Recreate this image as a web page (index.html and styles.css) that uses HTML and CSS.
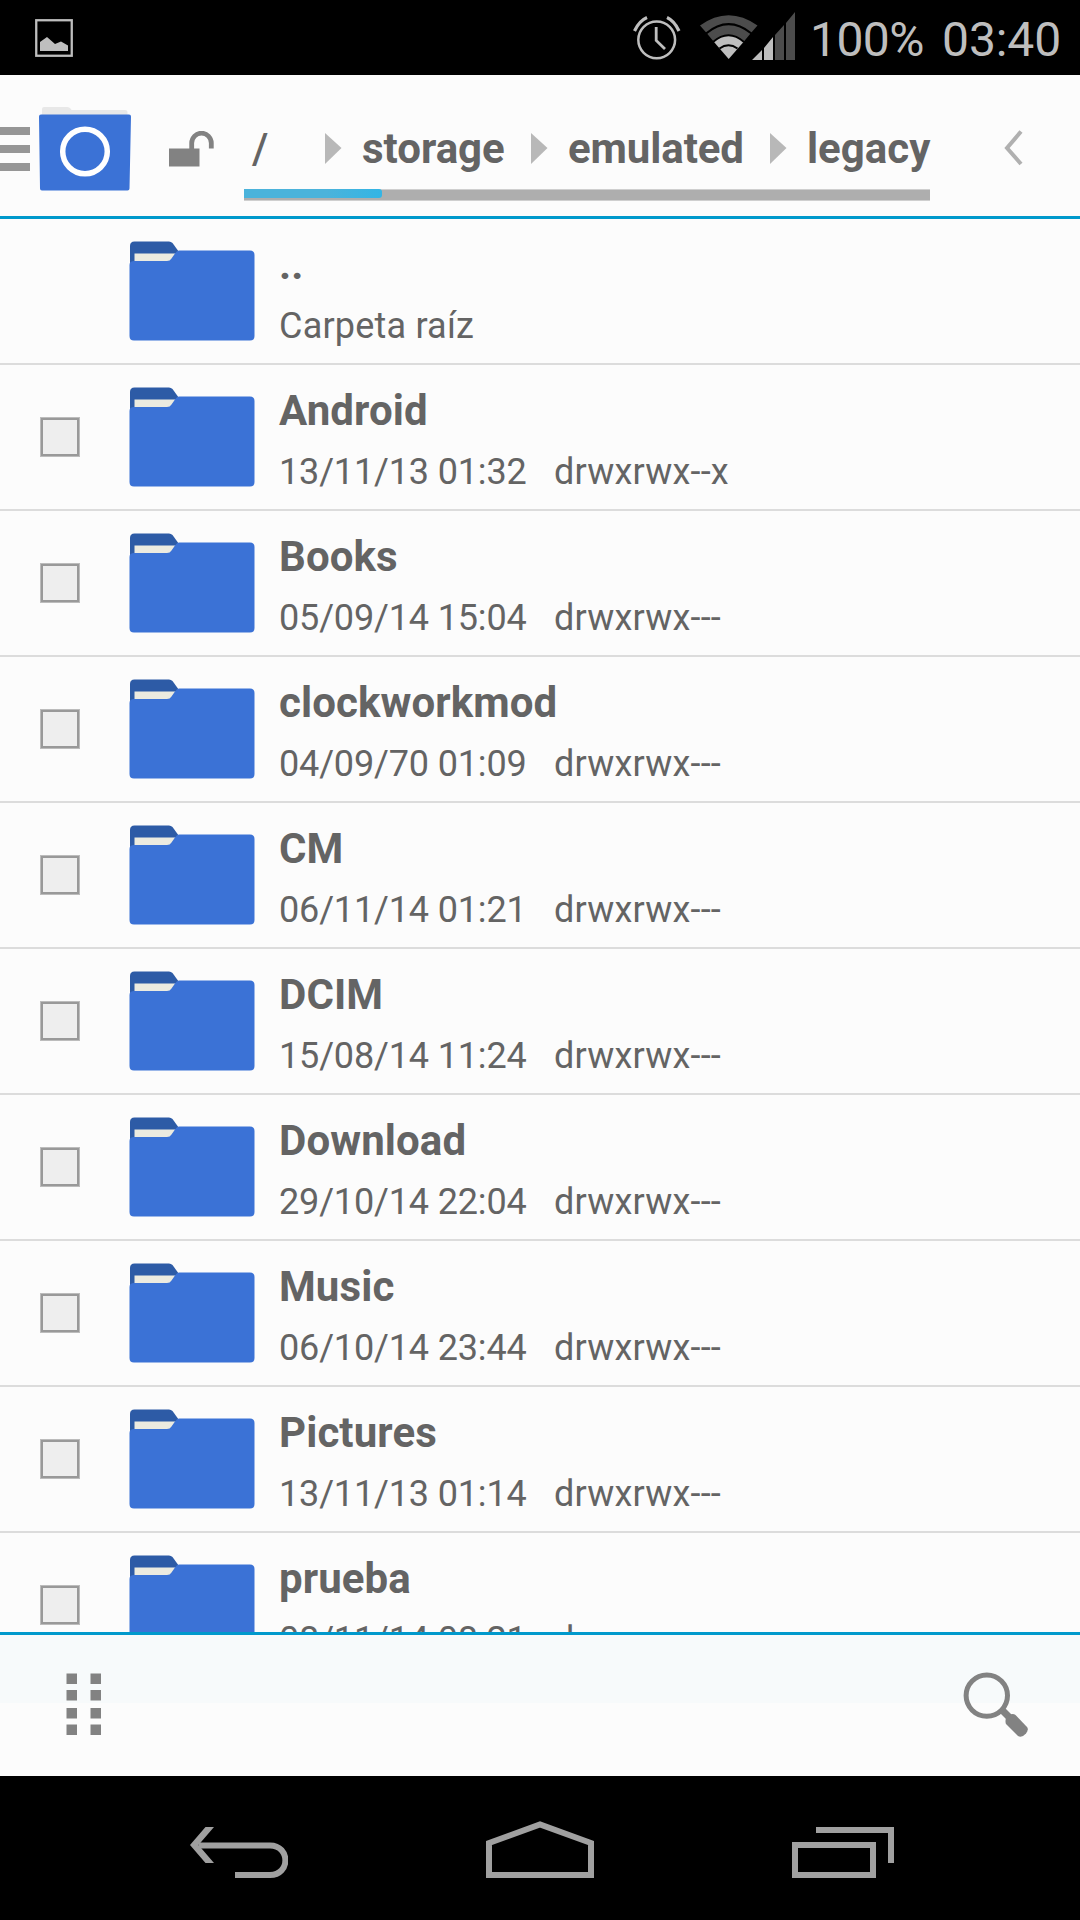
FILE: index.html
```html
<!DOCTYPE html>
<html lang="es">
<head>
<meta charset="utf-8">
<title>File Manager</title>
<link rel="stylesheet" href="styles.css">
</head>
<body>
<svg class="defs" width="0" height="0">
  <symbol id="folder" viewBox="0 0 126 100">
    <path d="M1 30V5Q1 .5 5.500.5H40Q42 .5 43.500 2L50 11V30Z" fill="#2d5ba6"/>
    <path d="M5.500 12.500H47V21H5.500Z" fill="#ecebe0"/>
    <path d="M50 9.500H121Q125.500 9.500 125.500 14V95Q125.500 99.500 121 99.500H5Q.5 99.500.5 95V24Q.5 20 5 20H38Q41 20 42.500 17.500L46 12.500Q48 9.500 50 9.500Z" fill="#3b72d6"/>
  </symbol>
  <symbol id="sep" viewBox="0 0 17 31"><path d="M0 0L16.500 15L0 31Z" fill="#b8b8b8"/></symbol>
</svg>
<div class="screen">
  <header class="status">
    <svg class="shot" width="38" height="38" viewBox="0 0 38 38"><rect x="1.250" y="1.250" width="35.500" height="35.500" fill="none" stroke="#bebebe" stroke-width="2.300"/><path d="M5 32V23L12 18L20 25L26 22.500L33 26.500V32Z" fill="#bebebe"/></svg>
    <svg class="alarm" width="48" height="46" viewBox="0 0 48 46" fill="none" stroke="#bebebe"><circle cx="23.700" cy="24.800" r="18.400" stroke-width="2.500"/><path d="M1.500 16Q6 6 14 2.500M46 16Q41.500 6 34 2.500" stroke-width="3.200"/><path d="M23.200 12V25.500L32 34" stroke-width="2.800"/></svg>
    <svg class="wifi" width="60" height="46" viewBox="0 0 60 46"><path d="M1 11.500Q29.500-9 58.500 11.500L51.500 19.500Q29.500 3.500 8 19.500Z" fill="#4c4c4c"/><path d="M8 19.500Q29.500 1.500 51.500 19.500L44.500 28Q29.500 15 15 28Z" fill="#4c4c4c"/><path d="M15 28Q29.500 14 44.500 28L29.700 45Z" fill="#bebebe"/><path d="M7 19.500Q29.500.7 52.500 19.500M14 28Q29.500 14.500 45 28M20.500 34.500Q29.500 28 38.500 34.500" fill="none" stroke="#000" stroke-width="2"/></svg>
    <svg class="signal" width="44" height="48" viewBox="0 0 44 48"><path d="M0 48L10 38V48ZM12 36L21 25V48H12Z" fill="#bebebe"/><path d="M23 23L32 13V48H23ZM34 11L43 0V48H34Z" fill="#4c4c4c"/></svg>
    <span class="battery">100%</span><span class="clock">03:40</span>
  </header>
  <nav class="bar">
    <div class="burger"><i></i><i></i><i></i></div>
    <svg class="app" width="92" height="86" viewBox="0 0 92 86"><path d="M3 12V3Q3 1 5 1H28Q31 1 32.500 4H86Q88.500 4 88.500 6V12Z" fill="#e8e8e8"/><path d="M2 8.500H90Q92 8.500 92 10.500L90.500 82.500Q90.500 84.500 88.500 84.500H3Q1 84.500 1 82.500L0 10.500Q0 8.500 2 8.500Z" fill="#3b72d6"/><circle cx="46" cy="45.500" r="22.300" fill="none" stroke="#fff" stroke-width="5.500"/></svg>
    <svg class="lock" width="46" height="36" viewBox="0 0 46 36"><path d="M0 17.500H30.500V35.500H0Z" fill="#828282"/><path d="M22.700 18V12A9.800 9.800 0 0 1 42.300 12V17.500" fill="none" stroke="#828282" stroke-width="4.800"/></svg>
    <div class="path">
      <div class="crumbs">
        <span class="crumb root">/</span><svg class="sep"><use href="#sep"/></svg>
        <span class="crumb storage">storage</span><svg class="sep"><use href="#sep"/></svg>
        <span class="crumb emulated">emulated</span><svg class="sep"><use href="#sep"/></svg>
        <span class="crumb legacy">legacy</span>
      </div>
      <div class="usage"><div class="used"></div></div>
    </div>
    <svg class="chev" width="20" height="36" viewBox="0 0 20 36"><path d="M17 1.500L3 18L17 34" fill="none" stroke="#b0b0b0" stroke-width="4"/></svg>
  </nav>
  <main class="list">
    <div class="row"><span class="nobox"></span><svg class="folder"><use href="#folder"/></svg><div class="info"><b>..</b><p><span class="note">Carpeta raíz</span></p></div></div>
    <div class="row"><span class="box"></span><svg class="folder"><use href="#folder"/></svg><div class="info"><b>Android</b><p><span class="date">13/11/13 01:32</span><span class="perm">drwxrwx--x</span></p></div></div>
    <div class="row"><span class="box"></span><svg class="folder"><use href="#folder"/></svg><div class="info"><b>Books</b><p><span class="date">05/09/14 15:04</span><span class="perm">drwxrwx---</span></p></div></div>
    <div class="row"><span class="box"></span><svg class="folder"><use href="#folder"/></svg><div class="info"><b>clockworkmod</b><p><span class="date">04/09/70 01:09</span><span class="perm">drwxrwx---</span></p></div></div>
    <div class="row"><span class="box"></span><svg class="folder"><use href="#folder"/></svg><div class="info"><b>CM</b><p><span class="date">06/11/14 01:21</span><span class="perm">drwxrwx---</span></p></div></div>
    <div class="row"><span class="box"></span><svg class="folder"><use href="#folder"/></svg><div class="info"><b>DCIM</b><p><span class="date">15/08/14 11:24</span><span class="perm">drwxrwx---</span></p></div></div>
    <div class="row"><span class="box"></span><svg class="folder"><use href="#folder"/></svg><div class="info"><b>Download</b><p><span class="date">29/10/14 22:04</span><span class="perm">drwxrwx---</span></p></div></div>
    <div class="row"><span class="box"></span><svg class="folder"><use href="#folder"/></svg><div class="info"><b>Music</b><p><span class="date">06/10/14 23:44</span><span class="perm">drwxrwx---</span></p></div></div>
    <div class="row"><span class="box"></span><svg class="folder"><use href="#folder"/></svg><div class="info"><b>Pictures</b><p><span class="date">13/11/13 01:14</span><span class="perm">drwxrwx---</span></p></div></div>
    <div class="row"><span class="box"></span><svg class="folder"><use href="#folder"/></svg><div class="info"><b>prueba</b><p><span class="date">08/11/14 08:21</span><span class="perm">drwxrwx---</span></p></div></div>
  </main>
  <footer class="tools">
    <svg class="dots" width="36" height="64" viewBox="0 0 36 64"><path d="M.5.500h10.500v10.500H.5ZM24.500.5h10.500v10.500H24.500ZM.5 17h10.500v10.500H.5ZM24.500 17h10.500v10.500H24.500ZM.5 35h10.500v10.500H.5ZM24.500 35h10.500v10.500H24.500ZM.5 51.500h10.500v10.500H.5ZM24.500 51.500h10.500v10.500H24.500Z" fill="#828282"/></svg>
    <svg width="68" height="68" viewBox="0 0 68 68"><circle cx="24.800" cy="24.600" r="20.700" fill="none" stroke="#828282" stroke-width="5"/><path d="M39 38L48 47" stroke="#828282" stroke-width="7"/><path d="M44 46.500Q50 41 53.500 44L65 56Q67 58.500 64 62.500Q59.500 67.500 56 65L44 53Q43 51 44 46.500Z" fill="#828282"/></svg>
  </footer>
  <div class="system">
    <svg width="98" height="52" viewBox="0 0 98 52"><path d="M9 18.500H80C100.500 18.500 100.500 48 80 48H45" fill="none" stroke="#a0a0a0" stroke-width="6"/><path d="M0 18L15.500 0H24L8.500 18L24 36H15.500Z" fill="#a0a0a0"/></svg>
    <svg width="108" height="58" viewBox="0 0 108 58"><path d="M3 54V22L54 3.500L105 22V54Z" fill="none" stroke="#a0a0a0" stroke-width="6"/></svg>
    <svg width="102" height="52" viewBox="0 0 102 52" fill="none" stroke="#a0a0a0" stroke-width="6"><path d="M3 18H81V48H3ZM24 3H99V36"/></svg>
  </div>
</div>
</body>
</html>
```
FILE: styles.css
```css
* { box-sizing: border-box; }
body { margin: 0; background: #000; font-family: Roboto, sans-serif; color: #646464; }
svg { display: block; flex: none; }
.defs { position: absolute; }
.screen { width: 1080px; height: 1920px; display: flex; flex-direction: column; overflow: hidden; }

.status { height: 75px; flex: none; display: flex; align-items: flex-start; color: #bebebe; font-size: 48px; line-height: 56px; white-space: nowrap; }
.shot { margin: 19px 0 0 35px; }
.alarm { margin: 15px 0 0 560px; }
.wifi { margin: 14px 0 0 18px; }
.signal { margin: 12px 0 0 -7px; }
.battery { width: 132px; margin: 12px 0 0 14px; letter-spacing: -.6px; }
.clock { margin-top: 12px; letter-spacing: -.1px; }

.bar { height: 144px; flex: none; display: flex; background: #fcfcfc; border-bottom: 3px solid #0099cc; }
.burger { width: 30px; display: flex; flex-direction: column; gap: 10px; padding-top: 52px; }
.burger i { height: 8px; background: #969696; }
.app { margin: 31px 0 0 9px; }
.lock { margin: 56px 0 0 38px; }
.path { width: 686px; margin-left: 29px; padding-top: 49px; }
.crumbs { display: flex; height: 65px; font-size: 42px; font-weight: 700; line-height: 50px; }
.crumb { flex: none; white-space: nowrap; }
.root { width: 81px; padding-left: 8px; font-weight: 500; }
.storage { width: 189px; padding-left: 20px; }
.emulated { width: 222px; padding-left: 20px; letter-spacing: -.1px; }
.legacy { padding-left: 20px; }
.sep { width: 17px; height: 31px; margin-top: 9px; }
.usage { height: 12px; background: #aeaeae; border: solid #cfcfcf; border-width: 1px 0; }
.used { width: 138px; height: 9px; margin-top: -1px; background: linear-gradient(90deg, #4bb3db 60%, #33b5e5); border-radius: 0 3px 3px 0; }
.chev { margin: 55px 0 0 74px; }

.list { height: 1413px; flex: none; overflow: hidden; background: #fcfcfc; }
.row { height: 146px; display: flex; border-bottom: 2px solid #dcdcdc; }
.box, .nobox { width: 40px; height: 40px; margin: 52px 0 0 40px; flex: none; }
.box { background: #eee; border: 1px solid #bcbcbc; box-shadow: inset 0 0 0 2px #999; }
.folder { width: 126px; height: 100px; margin: 22px 0 0 49px; }
.info { padding: 21px 0 0 24px; white-space: nowrap; }
.info b { display: block; font-size: 42px; line-height: 50px; letter-spacing: .1px; }
.info p { display: flex; margin: 14px 0 0; font-size: 36px; line-height: 44px; }
.date { width: 275px; letter-spacing: -.15px; }
.perm { letter-spacing: .2px; }
.note { letter-spacing: .2px; }

.tools { height: 144px; flex: none; display: flex; justify-content: space-between; align-items: flex-start; padding: 36px 50px 0 66px; border-top: 3px solid #0099cc; background: linear-gradient(#f7fafb 68px, #fcfcfc 68px); }
.dots { margin-top: 2px; }

.system { height: 144px; display: flex; justify-content: space-between; align-items: flex-end; padding: 0 186px 41px 190px; }
```
